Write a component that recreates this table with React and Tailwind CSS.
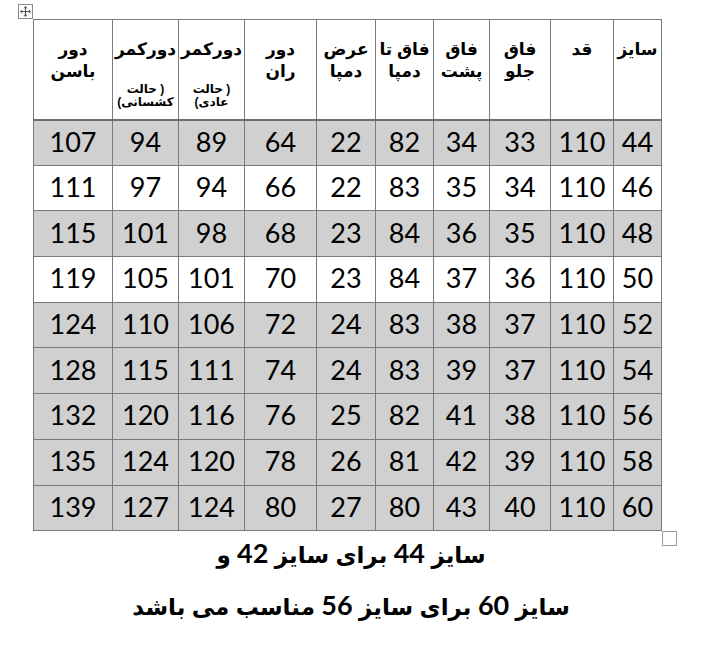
const headers = [
  { lines: ['سایز'] },
  { lines: ['قد'] },
  { lines: ['فاق', 'جلو'] },
  { lines: ['فاق', 'پشت'] },
  { lines: ['فاق تا', 'دمپا'] },
  { lines: ['عرض', 'دمپا'] },
  { lines: ['دور', 'ران'] },
  { lines: ['دورکمر'], small: ['حالت )', '(عادی'] },
  { lines: ['دورکمر'], small: ['حالت )', '(کشسانی'] },
  { lines: ['دور', 'باسن'] },
];

const widths = ['w-[48px]', 'w-[63px]', 'w-[61px]', 'w-[56px]', 'w-[58px]', 'w-[59px]', 'w-[72px]', 'w-[66px]', 'w-[66px]', 'w-[79px]'];

const rows = [
  { shade: true, cells: [44, 110, 33, 34, 82, 22, 64, 89, 94, 107] },
  { shade: false, cells: [46, 110, 34, 35, 83, 22, 66, 94, 97, 111] },
  { shade: true, cells: [48, 110, 35, 36, 84, 23, 68, 98, 101, 115] },
  { shade: false, cells: [50, 110, 36, 37, 84, 23, 70, 101, 105, 119] },
  { shade: true, cells: [52, 110, 37, 38, 83, 24, 72, 106, 110, 124] },
  { shade: true, cells: [54, 110, 37, 39, 83, 24, 74, 111, 115, 128] },
  { shade: true, cells: [56, 110, 38, 41, 82, 25, 76, 116, 120, 132] },
  { shade: true, cells: [58, 110, 39, 42, 81, 26, 78, 120, 124, 135] },
  { shade: true, cells: [60, 110, 40, 43, 80, 27, 80, 124, 127, 139] },
];

const arabic = { fontFamily: '"Liberation Sans", "DejaVu Sans", sans-serif' };
const digits = { fontFamily: 'Lato, "Open Sans", sans-serif' };

const MoveHandle = () => (
  <div className="absolute left-[18px] top-[4px] w-[15px] h-[15px] border border-[#8a8a8a] bg-white flex items-center justify-center">
    <svg width="11" height="11" viewBox="0 0 11 11" fill="#555">
      <rect x="5" y="1.5" width="1" height="8" />
      <rect x="1.5" y="5" width="8" height="1" />
      <polygon points="5.5,0 3.5,2.2 7.5,2.2" />
      <polygon points="5.5,11 3.5,8.8 7.5,8.8" />
      <polygon points="0,5.5 2.2,3.5 2.2,7.5" />
      <polygon points="11,5.5 8.8,3.5 8.8,7.5" />
    </svg>
  </div>
);

// digits in the note are set in a Latin face, as Word does
const Num = ({ children }) => (
  <span className="text-[27px] font-bold" style={digits}>
    {children}
  </span>
);

export default function App() {
  return (
    <div className="relative w-[702px] h-[647px] bg-white overflow-hidden">
      <MoveHandle />

      <div className="pt-[19px] pl-[33px]">
        <table dir="rtl" className="table-fixed border-collapse w-[629px]">
          <colgroup>
            {widths.map((w, i) => (
              <col key={i} className={w} />
            ))}
          </colgroup>
          <thead>
            <tr className="h-[100px]">
              {headers.map((h, i) => (
                <th
                  key={i}
                  className="border border-[#7a7a7a] border-b-2 border-b-[#6e6e6e] align-top p-0 pt-[19px] text-center text-black font-bold"
                  style={arabic}
                >
                  {h.lines.map((l, j) => (
                    <div key={j} dir="rtl" className="text-[17px] leading-[22px]">
                      {l}
                    </div>
                  ))}
                  {h.small && (
                    <div className="mt-[22px]">
                      {h.small.map((s, j) => (
                        <div key={j} dir="ltr" className="text-[12px] leading-[13px]">
                          {s}
                        </div>
                      ))}
                    </div>
                  )}
                </th>
              ))}
            </tr>
          </thead>
          <tbody>
            {rows.map((r, i) => (
              <tr key={i} className={r.shade ? 'h-[45.7px] bg-[#d0d0d0]' : 'h-[45.7px] bg-white'}>
                {r.cells.map((c, j) => (
                  <td
                    key={j}
                    dir="ltr"
                    className="border border-[#7a7a7a] p-0 text-center text-black text-[27px] leading-none pb-[3px]"
                    style={digits}
                  >
                    {c}
                  </td>
                ))}
              </tr>
            ))}
          </tbody>
        </table>
      </div>

      <div className="absolute left-[662px] top-[531px] w-[15px] h-[15px] border border-[#9a9a9a] bg-white" />

      <div dir="rtl" className="mt-[4px] flex flex-col items-center gap-[14px] text-black font-bold text-[23px] leading-[36px]" style={arabic}>
        <p>
          سایز <Num>44</Num> برای سایز <Num>42</Num> و
        </p>
        <p>
          سایز <Num>60</Num> برای سایز <Num>56</Num> مناسب می باشد
        </p>
      </div>
    </div>
  );
}
